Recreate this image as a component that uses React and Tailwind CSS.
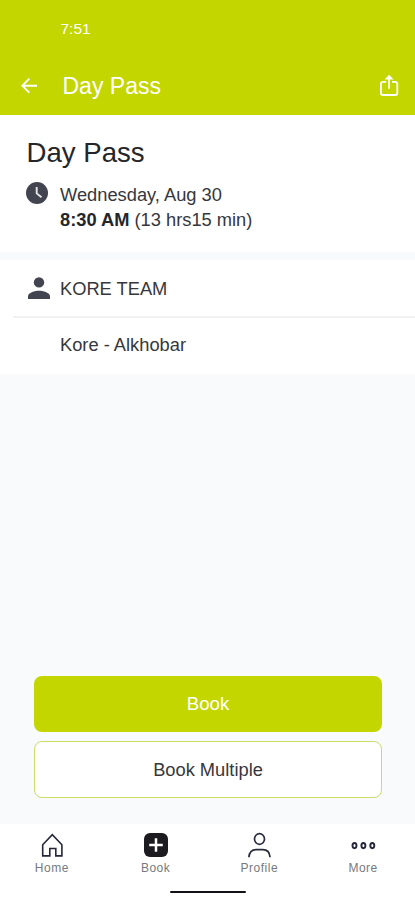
function BackIcon() {
    return (
        <svg width="16" height="16" viewBox="0 0 16 16" fill="none" stroke="currentColor" strokeWidth="1.9">
            <path d="M16 7.7H1.5M8.3.7 1.3 7.7l7 7" />
        </svg>
    );
}

function ShareIcon() {
    return (
        <svg width="20" height="24" viewBox="0 0 20 24" fill="none" stroke="currentColor" strokeWidth="1.8">
            <path d="M7.2 7.8H3.9a2 2 0 0 0-2 2v9.2a2 2 0 0 0 2 2h12.4a2 2 0 0 0 2-2V9.8a2 2 0 0 0-2-2H13" />
            <path d="M10.1 14.8V3" />
            <path d="M10.1.7 14.6 5.6h-9z" fill="currentColor" stroke="none" />
        </svg>
    );
}

function ClockIcon() {
    return (
        <svg width="22" height="22" viewBox="0 0 22 22" fill="none">
            <circle cx="11" cy="11" r="11" fill="#42454f" />
            <path d="M10.7 5v6.4l4.8 3.9" stroke="#e4e6ea" strokeWidth="1.9" />
        </svg>
    );
}

function PersonIcon() {
    return (
        <svg width="22" height="22" viewBox="0 0 22 22" fill="#42454f">
            <circle cx="11" cy="5.4" r="5.2" />
            <path d="M0 22v-2.8c0-3.7 7.3-5.5 11-5.5s11 1.8 11 5.5V22z" />
        </svg>
    );
}

function HomeIcon() {
    return (
        <svg width="24" height="26" viewBox="0 0 24 26" fill="none" stroke="#25263a" strokeWidth="1.6">
            <path d="M2.7 12.7 12.3 2.6l9.6 10.1v11.2h-6.1v-7.4h-6v7.4H2.7z" />
        </svg>
    );
}

function BookIcon() {
    return (
        <svg width="26" height="26" viewBox="0 0 26 26" fill="none">
            <rect x="1" y="1" width="24" height="24" rx="6" fill="#1b1b20" />
            <path d="M13 6.2v13.6M6.2 13h13.6" stroke="white" strokeWidth="2.5" />
        </svg>
    );
}

function ProfileIcon() {
    return (
        <svg width="24" height="26" viewBox="0 0 24 26" fill="none" stroke="#2b2c3b" strokeWidth="1.7">
            <ellipse cx="12.5" cy="7" rx="5" ry="5.3" />
            <path d="M1.9 25.3c.4-5 3.5-7.6 7.3-7.6h6.6c3.8 0 6.9 2.6 7.3 7.6" />
        </svg>
    );
}

function MoreIcon() {
    return (
        <svg width="26" height="26" viewBox="0 0 26 26" fill="none" stroke="#25263a" strokeWidth="1.9">
            <ellipse cx="4.5" cy="13.6" rx="2" ry="2.6" />
            <ellipse cx="13.4" cy="13.6" rx="2" ry="2.6" />
            <ellipse cx="22.3" cy="13.6" rx="2" ry="2.6" />
        </svg>
    );
}

const tabs = [
    { label: 'Home', Icon: HomeIcon },
    { label: 'Book', Icon: BookIcon },
    { label: 'Profile', Icon: ProfileIcon },
    { label: 'More', Icon: MoreIcon },
];

export default function App() {
    return (
        <div className="flex h-[900px] w-[415px] flex-col overflow-hidden bg-[#f8fafc] font-['Liberation_Sans',Arial,sans-serif] text-[18.3px] text-[#36373c]">
            <header className="h-[114.5px] shrink-0 bg-[#c3d600] text-white">
                <div className="flex h-[57px] items-center pl-[60.5px] text-[15.5px]">7:51</div>
                <div className="flex h-[57px] items-center pr-4 pl-[21px]">
                    <button aria-label="Back"><BackIcon /></button>
                    <h1 className="ml-[25.5px] flex-1 pt-px text-[23px]">Day Pass</h1>
                    <button aria-label="Share"><ShareIcon /></button>
                </div>
            </header>

            <section className="h-[137.5px] shrink-0 bg-white pt-[20px] pl-[26px]">
                <h2 className="pl-[0.5px] text-[27.6px] leading-[36px] text-[#25262a]">Day Pass</h2>
                <div className="mt-[11px] flex gap-[12px]">
                    <ClockIcon />
                    <div className="leading-[25px]">
                        <p>Wednesday, Aug 30</p>
                        <p><b className="text-[#25262a]">8:30 AM</b> (13 hrs15 min)</p>
                    </div>
                </div>
            </section>

            <section className="mt-2 shrink-0 bg-white">
                <div className="flex h-[56px] items-center gap-[10px] pl-7">
                    <PersonIcon />
                    <span className="pt-px">KORE TEAM</span>
                </div>
                <div className="ml-[13px] h-[2px] bg-[#f1f2f3]" />
                <div className="flex h-[56px] items-center pl-[60px] pb-[2px]">Kore - Alkhobar</div>
            </section>

            <div className="mt-auto flex flex-col gap-[9.5px] pr-[33px] pb-[26px] pl-[34px]">
                <button className="h-[56px] rounded-[8px] bg-[#c3d600] text-[18.6px] text-white">Book</button>
                <button className="h-[57px] rounded-[8px] border border-[#cbdc69] bg-white">Book Multiple</button>
            </div>

            <nav className="flex h-[76px] shrink-0 flex-col items-center bg-white pt-[7.5px]">
                <div className="grid w-full grid-cols-4">
                    {tabs.map(({ label, Icon }) => (
                        <button key={label} className="flex flex-col items-center">
                            <Icon />
                            <span className="mt-[2px] text-[12px] leading-4 tracking-[0.5px] text-[#777980]">{label}</span>
                        </button>
                    ))}
                </div>
                <div className="mt-[15px] h-[2px] w-[76px] rounded-full bg-[#111217]" />
            </nav>
        </div>
    );
}
